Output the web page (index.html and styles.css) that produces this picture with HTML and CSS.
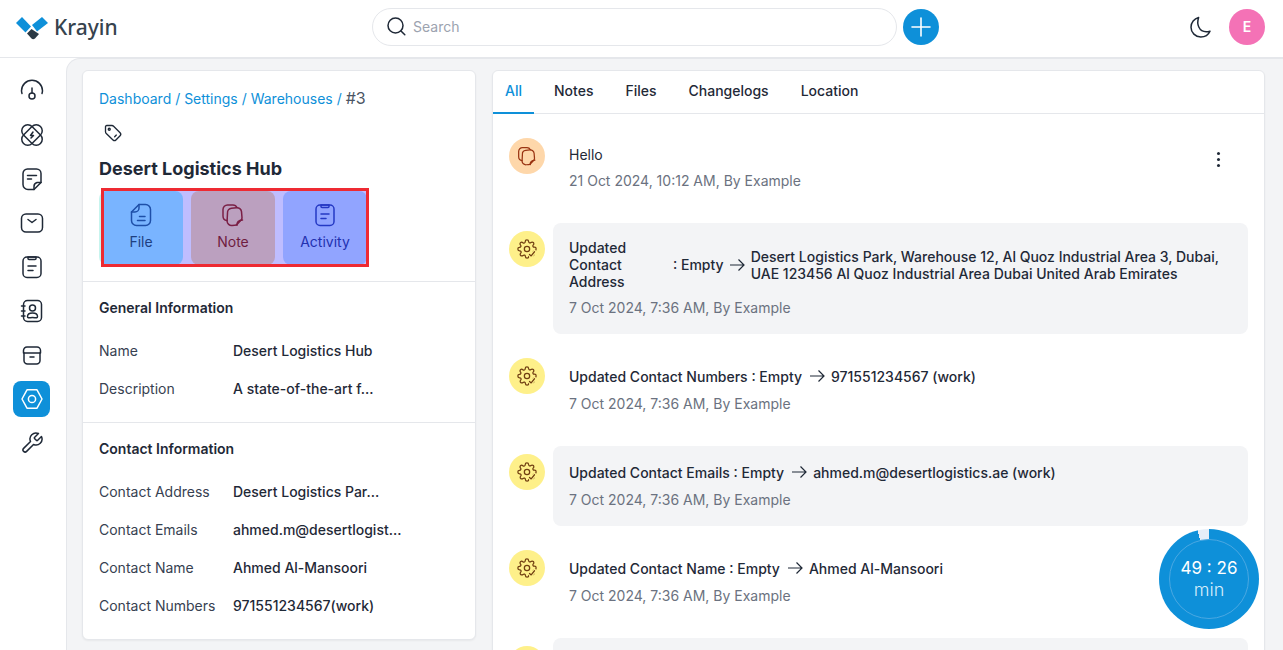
FILE: index.html
```html
<!DOCTYPE html>
<html lang="en">
<head>
    <meta charset="UTF-8">
    <meta name="viewport" content="width=device-width, initial-scale=1.0">
    <title>Krayin - Warehouse</title>
    <link rel="stylesheet" href="styles.css">
</head>
<body>
    <header class="topbar">
        <div class="logo">
            <svg width="36" height="26" viewBox="15 14 36 26">
                <path d="M16 23 22 17 31 26.500 25.500 32.500Z" fill="#0e90d9"/>
                <path d="M32 25 42 17 48 23 37 31.500Z" fill="#0e90d9"/>
                <path d="M27 33.500 31.500 29 39 34 35 38.500Q33 40 31.500 38.500Z" fill="#2b3a45"/>
            </svg>
            <span class="logo-text">Krayin</span>
        </div>
        <div class="search">
            <svg width="20" height="20" viewBox="0 0 20 20" fill="none" stroke="#1f2937" stroke-width="1.5" stroke-linecap="round"><circle cx="8.500" cy="8.500" r="7.500"/><path d="M14 14 17.800 17.800"/></svg>
            <span>Search</span>
        </div>
        <div class="plus-btn">
            <svg width="24" height="24" viewBox="0 0 24 24" fill="none" stroke="#fff" stroke-width="1.6" stroke-linecap="round"><path d="M12 3v18M3 12h18"/></svg>
        </div>
        <div class="topbar-right">
            <svg class="moon" width="24" height="24" viewBox="0 0 24 24" fill="none" stroke="#1f2937" stroke-width="1.5" stroke-linejoin="round"><path d="M9.600 2.500C5.200 3.600 2 7.600 2 12.200 2 17.600 6.400 22 11.800 22c3.800 0 7.600-2.200 9.200-5.800-5.200 1.400-9.400-.4-11.200-4.200-1.400-3-1.200-6.400-.2-9.500Z"/></svg>
            <div class="avatar">E</div>
        </div>
    </header>

    <div class="shell">
        <nav class="sidebar">
            <div class="nav-item">
                <svg class="icon" viewBox="0 0 24 24"><path d="M2 14.500C1.700 13.500 1.500 12.600 1.500 11.800a10.500 10.500 0 0 1 21 0c0 .8-.2 1.700-.5 2.700"/><path d="M12 9v5"/><circle cx="12" cy="17" r="3"/></svg>
            </div>
            <div class="nav-item">
                <svg class="icon" viewBox="0 0 24 24"><rect x="0" y="6" width="24" height="12" rx="6" transform="rotate(45 12 12)"/><rect x="0" y="6" width="24" height="12" rx="6" transform="rotate(-45 12 12)"/><path d="M13 9 10.500 12.500h3L11 15"/></svg>
            </div>
            <div class="nav-item">
                <svg class="icon" viewBox="0 0 24 24"><path d="M14 22.500H8a5 5 0 0 1-5-5v-11A4.500 4.500 0 0 1 7.500 2h9A4.500 4.500 0 0 1 21 6.500V15.500Z"/><path d="M14 22.500v-3a4 4 0 0 1 3-4h4"/><path d="M7.500 8.500h9M7.500 12h4"/></svg>
            </div>
            <div class="nav-item">
                <svg class="icon" viewBox="0 0 24 24"><rect x="1.500" y="3" width="21" height="18" rx="4.500"/><path d="M8 8.500 12 11.500 16 8.500"/></svg>
            </div>
            <div class="nav-item">
                <svg class="icon" viewBox="0 0 24 24"><rect x="3" y="2" width="18" height="20.500" rx="4"/><path d="M8 2h8v1.500a1 1 0 0 1-1 1H9a1 1 0 0 1-1-1Z"/><path d="M8 11h8M8 15.500h5"/></svg>
            </div>
            <div class="nav-item">
                <svg class="icon" viewBox="0 0 24 24"><rect x="3.500" y="1.500" width="18" height="21" rx="4"/><circle cx="12.500" cy="9" r="3"/><path d="M7.500 17.500c0-2 2-3.500 5-3.500s5 1.500 5 3.500-2 1-5 1-5 1-5-1Z"/><path d="M1.500 7h3.500M1.500 12h3.500M1.500 17h3.500"/></svg>
            </div>
            <div class="nav-item">
                <svg class="icon" viewBox="0 0 24 24"><path d="M4 10v7.500a3.500 3.500 0 0 0 3.500 3.500h9a3.500 3.500 0 0 0 3.500-3.500V10"/><path d="M3.500 10V7.500A3.500 3.500 0 0 1 7 4h10a3.500 3.500 0 0 1 3.500 3.500V10Z"/><path d="M10 14h4"/></svg>
            </div>
            <div class="nav-item active">
                <svg class="icon" viewBox="0 0 24 24"><path d="M7 2.800h10L22 12l-5 9.200H7L2 12Z"/><circle cx="12" cy="12" r="3.600"/></svg>
            </div>
            <div class="nav-item">
                <svg class="icon" viewBox="0 0 24 24"><path d="M14.700 6.300a1 1 0 0 0 0 1.400l1.600 1.600a1 1 0 0 0 1.400 0l3.770-3.770a6 6 0 0 1-7.940 7.940l-6.910 6.910a2.120 2.120 0 0 1-3-3l6.910-6.910a6 6 0 0 1 7.940-7.940l-3.760 3.760Z"/></svg>
            </div>
        </nav>

        <main class="main">
            <section class="card info-card">
                <div class="head">
                    <div class="breadcrumb"><a>Dashboard</a> / <a>Settings</a> / <a>Warehouses</a> / <span>#3</span></div>
                    <svg class="tag" viewBox="0 0 24 24"><path d="M4.500 3h6.200a3 3 0 0 1 2 .9l7.800 7.900a2.500 2.500 0 0 1 0 3.500l-5 5a2.500 2.500 0 0 1-3.500 0L3.900 12.600a3 3 0 0 1-.9-2V4.500A1.500 1.500 0 0 1 4.500 3Z"/><circle cx="7.500" cy="7.500" r="1.200"/><path d="M14 16.500l2-2"/></svg>
                    <h1>Desert Logistics Hub</h1>
                    <div class="actions">
                        <div class="action action-file">
                            <svg class="icon" viewBox="0 0 24 24"><path d="M10 1.500h6.500a5 5 0 0 1 5 5v11a5 5 0 0 1-5 5h-9a5 5 0 0 1-5-5V9Z"/><path d="M2.500 9H6a4 4 0 0 0 4-4V1.500"/><path d="M10.500 13.500h5.500M8.500 17.500h7.500"/></svg>
                            <span>File</span>
                        </div>
                        <div class="action action-note">
                            <svg class="icon" viewBox="0 0 24 24"><use href="#note"/></svg>
                            <span>Note</span>
                        </div>
                        <div class="action action-activity">
                            <svg class="icon" viewBox="0 0 24 24"><rect x="3" y="2" width="18" height="20.500" rx="4"/><path d="M8 2h8v1.500a1 1 0 0 1-1 1H9a1 1 0 0 1-1-1Z"/><path d="M8 11h8M8 15.500h5"/></svg>
                            <span>Activity</span>
                        </div>
                        <div class="highlight"></div>
                    </div>
                </div>

                <div class="info-block">
                    <h2>General Information</h2>
                    <div class="info-row"><span>Name</span><span class="val">Desert Logistics Hub</span></div>
                    <div class="info-row"><span>Description</span><span class="val">A state-of-the-art f...</span></div>
                </div>

                <div class="info-block">
                    <h2>Contact Information</h2>
                    <div class="info-row"><span>Contact Address</span><span class="val">Desert Logistics Par...</span></div>
                    <div class="info-row"><span>Contact Emails</span><span class="val">ahmed.m@desertlogist...</span></div>
                    <div class="info-row"><span>Contact Name</span><span class="val">Ahmed Al-Mansoori</span></div>
                    <div class="info-row"><span>Contact Numbers</span><span class="val">971551234567(work)</span></div>
                </div>
            </section>

            <section class="card activity-card">
                <div class="tabs">
                    <div class="tab current">All</div>
                    <div class="tab">Notes</div>
                    <div class="tab">Files</div>
                    <div class="tab">Changelogs</div>
                    <div class="tab">Location</div>
                </div>
                <div class="feed">
                    <div class="entry entry-first">
                        <div class="badge badge-note">
                            <svg class="icon" viewBox="0 0 24 24"><use href="#note"/></svg>
                        </div>
                        <div class="body">
                            <div class="line plain">Hello</div>
                            <div class="date">21 Oct 2024, 10:12 AM, By Example</div>
                            <div class="kebab"><i></i><i></i><i></i></div>
                        </div>
                    </div>
                    <div class="entry">
                        <div class="badge badge-system"><svg class="icon" viewBox="0 0 24 24"><use href="#gear"/></svg></div>
                        <div class="body shaded">
                            <div class="line">
                                <span class="label-narrow">Updated Contact Address</span>
                                <span class="nowrap">: Empty</span>
                                <svg class="arrow" viewBox="0 0 16 16"><path d="M1 8h14M9.500 2.500 15 8l-5.500 5.500"/></svg>
                                <span>Desert Logistics Park, Warehouse 12, Al Quoz Industrial Area 3, Dubai, UAE 123456 Al Quoz Industrial Area Dubai United Arab Emirates</span>
                            </div>
                            <div class="date">7 Oct 2024, 7:36 AM, By Example</div>
                        </div>
                    </div>
                    <div class="entry">
                        <div class="badge badge-system"><svg class="icon" viewBox="0 0 24 24"><use href="#gear"/></svg></div>
                        <div class="body">
                            <div class="line">
                                <span class="lead">Updated Contact Numbers : Empty</span>
                                <svg class="arrow" viewBox="0 0 16 16"><path d="M1 8h14M9.500 2.500 15 8l-5.500 5.500"/></svg>
                                <span>971551234567 (work)</span>
                            </div>
                            <div class="date">7 Oct 2024, 7:36 AM, By Example</div>
                        </div>
                    </div>
                    <div class="entry">
                        <div class="badge badge-system"><svg class="icon" viewBox="0 0 24 24"><use href="#gear"/></svg></div>
                        <div class="body shaded">
                            <div class="line">
                                <span class="lead">Updated Contact Emails : Empty</span>
                                <svg class="arrow" viewBox="0 0 16 16"><path d="M1 8h14M9.500 2.500 15 8l-5.500 5.500"/></svg>
                                <span>ahmed.m@desertlogistics.ae (work)</span>
                            </div>
                            <div class="date">7 Oct 2024, 7:36 AM, By Example</div>
                        </div>
                    </div>
                    <div class="entry">
                        <div class="badge badge-system"><svg class="icon" viewBox="0 0 24 24"><use href="#gear"/></svg></div>
                        <div class="body">
                            <div class="line">
                                <span class="lead">Updated Contact Name : Empty</span>
                                <svg class="arrow" viewBox="0 0 16 16"><path d="M1 8h14M9.500 2.500 15 8l-5.500 5.500"/></svg>
                                <span>Ahmed Al-Mansoori</span>
                            </div>
                            <div class="date">7 Oct 2024, 7:36 AM, By Example</div>
                        </div>
                    </div>
                    <div class="entry">
                        <div class="badge badge-system"><svg class="icon" viewBox="0 0 24 24"><use href="#gear"/></svg></div>
                        <div class="body shaded body-empty"></div>
                    </div>
                </div>
            </section>
        </main>
    </div>

    <div class="timer">
        <div class="timer-inner">
            <div class="timer-time">49 : 26</div>
            <div class="timer-unit">min</div>
        </div>
    </div>

    <svg class="defs" width="0" height="0">
        <defs>
            <g id="gear">
                <circle cx="12" cy="12" r="3.200"/>
                <path d="M19.400 15a1.650 1.650 0 0 0 .33 1.820l.06.06a2 2 0 1 1-2.830 2.830l-.06-.06a1.650 1.650 0 0 0-2.800 1.170V21a2 2 0 1 1-4 0v-.09a1.650 1.650 0 0 0-2.800-1.170l-.06.06a2 2 0 1 1-2.830-2.830l.06-.06a1.650 1.650 0 0 0-1.170-2.800H3a2 2 0 1 1 0-4h.09a1.650 1.650 0 0 0 1.170-2.800l-.06-.06a2 2 0 1 1 2.830-2.830l.06.06a1.650 1.650 0 0 0 2.800-1.170V3a2 2 0 1 1 4 0v.09a1.650 1.650 0 0 0 2.800 1.170l.06-.06a2 2 0 1 1 2.830 2.830l-.06.06a1.650 1.650 0 0 0 1.170 2.800H21a2 2 0 1 1 0 4h-.09a1.650 1.650 0 0 0-1.510 1Z"/>
                <path d="M15 18.500l2 1.800 4-5" stroke="#fef08a" stroke-width="4.500"/>
                <path d="M15 18.500l2 1.800 4-5"/>
            </g>
            <g id="note">
                <path d="M6 17.500A4.500 4.500 0 0 1 2 13V6.500A4.500 4.500 0 0 1 6.500 2H12a4.500 4.500 0 0 1 4 2.500"/>
                <path d="M6.500 10a4.500 4.500 0 0 1 4-4.800l5-.5a4.500 4.500 0 0 1 5 4l.5 5.800c.1 1-.2 1.800-.9 2.600l-3.900 4.200c-.6.600-1.400 1-2.300 1l-3 .2a4.500 4.500 0 0 1-4.800-4.200Z"/>
                <path d="M16 22.300c-.4-3 1.500-5 5.500-5.300"/>
            </g>
        </defs>
    </svg>
</body>
</html>
```

FILE: styles.css
```css
* {
    box-sizing: border-box;
}
html, body {
    height: 100%;
}
body {
    margin: 0;
    font-family: Inter, "Liberation Sans", sans-serif;
    font-size: 14px;
    line-height: 20px;
    color: #1f2937;
    background: #fff;
    overflow: hidden;
}
h1, h2 {
    margin: 0;
}
.icon {
    width: 24px;
    height: 24px;
    fill: none;
    stroke: #1f2937;
    stroke-width: 1.5;
    stroke-linecap: round;
    stroke-linejoin: round;
}

/* top bar */
.topbar {
    display: flex;
    align-items: center;
    height: 58px;
    padding: 0 18px 4px 15px;
    background: #fff;
    border-bottom: 1px solid #e5e7eb;
}
.logo {
    display: flex;
    align-items: center;
    gap: 4px;
    width: 357px;
}
.logo-text {
    margin: 1px 0 0 -1px;
    font-family: "Noto Sans", sans-serif;
    font-size: 21px;
    font-weight: 500;
    color: #36434e;
}
.search {
    display: flex;
    align-items: center;
    gap: 6px;
    width: 525px;
    height: 38px;
    padding-left: 14px;
    border: 1px solid #e5e7eb;
    border-radius: 19px;
    color: #9ca3af;
}
.plus-btn {
    display: flex;
    align-items: center;
    justify-content: center;
    width: 36px;
    height: 36px;
    margin-left: 6px;
    border-radius: 50%;
    background: #0e90d9;
}
.topbar-right {
    display: flex;
    align-items: center;
    gap: 16px;
    margin-left: auto;
}
.avatar {
    display: flex;
    align-items: center;
    justify-content: center;
    width: 36px;
    height: 36px;
    border-radius: 50%;
    background: #f472b6;
    color: #fff;
    font-weight: 600;
}

/* layout */
.shell {
    display: flex;
    height: calc(100% - 58px);
}
.sidebar {
    display: flex;
    flex-direction: column;
    gap: 8px;
    width: 66px;
    padding: 15px 0 0 13px;
}
.nav-item {
    display: flex;
    align-items: center;
    justify-content: center;
    width: 37px;
    height: 36px;
    border-radius: 8px;
}
.nav-item.active {
    background: #0e90d9;
}
.nav-item.active .icon {
    stroke: #fff;
}
.main {
    flex: 1;
    display: flex;
    align-items: flex-start;
    gap: 16px;
    padding: 11px 18px 0 15px;
    background: #f3f4f6;
    border-top: 1px solid #e5e7eb;
    border-left: 1px solid #e5e7eb;
    border-top-left-radius: 14px;
    overflow: hidden;
}
.card {
    background: #fff;
    border: 1px solid #e5e7eb;
    border-radius: 6px;
    box-shadow: 0 1px 2px rgba(0, 0, 0, 0.05);
}

/* left card */
.info-card {
    flex: 0 0 394px;
    height: 570px;
}
.head {
    padding: 17px 16px 16px;
    border-bottom: 1px solid #e5e7eb;
}
.breadcrumb {
    color: #0e90d9;
}
.breadcrumb span {
    font-size: 16px;
    color: #4b5563;
}
.tag {
    display: block;
    width: 20px;
    height: 20px;
    margin: 14px 0 0 4px;
    fill: none;
    stroke: #1f2937;
    stroke-width: 1.6;
    stroke-linecap: round;
    stroke-linejoin: round;
}
h1 {
    margin-top: 14px;
    font-size: 18px;
    line-height: 24px;
    font-weight: 700;
    color: #1f2937;
}
.actions {
    position: relative;
    display: flex;
    gap: 8px;
    width: 268px;
    margin-top: 10px;
    background: linear-gradient(to right, transparent 2px, #bfbdff 2px);
}
.action {
    display: flex;
    flex-direction: column;
    align-items: center;
    gap: 5px;
    width: 84px;
    height: 74px;
    padding-top: 12px;
    border-radius: 8px;
    font-weight: 400;
}
.action-file {
    background: linear-gradient(to right, #c7f4ee 2px, #79b4ff 2px);
    color: #1e3f80;
}
.action-file .icon {
    stroke: #1e4fa8;
}
.action-note {
    background: #bba0bf;
    color: #6f1c40;
}
.action-note .icon {
    stroke: #7a1f45;
}
.action-activity {
    background: #91a4ff;
    color: #2231b0;
}
.action-activity .icon {
    stroke: #2438c4;
}
.highlight {
    position: absolute;
    left: 2px;
    top: -3px;
    width: 268px;
    height: 79px;
    border: 3px solid #ee2a32;
}
.info-block {
    padding: 16px 16px 5px;
    border-bottom: 1px solid #e5e7eb;
}
.info-block:last-child {
    border-bottom: 0;
}
h2 {
    margin-bottom: 23px;
    font-size: 14px;
    line-height: 20px;
    font-weight: 600;
    color: #1f2937;
}
.info-row {
    display: grid;
    grid-template-columns: 134px 1fr;
    height: 38px;
    color: #374151;
}
.val {
    font-weight: 500;
    color: #1f2937;
}

/* right card */
.activity-card {
    flex: 1;
    height: 700px;
}
.tabs {
    display: flex;
    gap: 8px;
    height: 43px;
    border-bottom: 1px solid #e5e7eb;
}
.tab {
    height: 43px;
    padding: 10px 12px 0;
    font-weight: 500;
    color: #1f2937;
}
.tab.current {
    color: #0e90d9;
    border-bottom: 2px solid #0e90d9;
}
.feed {
    display: flex;
    flex-direction: column;
    gap: 16px;
    padding: 16px 16px 0;
}
.entry {
    display: flex;
    gap: 8px;
    align-items: flex-start;
}
.badge {
    display: flex;
    flex: 0 0 36px;
    align-items: center;
    justify-content: center;
    height: 36px;
    margin-top: 8px;
    border-radius: 50%;
}
.badge .icon {
    width: 20px;
    height: 20px;
}
.badge-note {
    background: #fed7aa;
}
.badge-note .icon {
    stroke: #9a3412;
}
.badge-system {
    background: #fef08a;
}
.badge-system .icon {
    stroke: #713f12;
}
.body {
    position: relative;
    flex: 1;
    padding: 16px;
    border-radius: 8px;
}
.body.shaded {
    background: #f3f4f6;
}
.body-empty {
    height: 80px;
}
.entry-first .body {
    padding-top: 15px;
}
.line {
    box-sizing: content-box;
    display: flex;
    align-items: center;
    gap: 6px;
    min-height: 20px;
    padding-bottom: 2px;
    font-weight: 500;
    line-height: 17px;
}
.line.plain {
    display: block;
    padding-bottom: 0;
    font-weight: 400;
    line-height: 20px;
}
.lead {
    padding-right: 1px;
}
.label-narrow {
    flex: 0 0 98px;
}
.nowrap {
    margin-right: -1px;
    white-space: nowrap;
}
.arrow {
    flex: 0 0 16px;
    width: 16px;
    height: 16px;
    fill: none;
    stroke: #1f2937;
    stroke-width: 1.2;
}
.date {
    margin-top: 6px;
    color: #6b7280;
}
.kebab {
    position: absolute;
    top: 22px;
    right: 28px;
    display: flex;
    flex-direction: column;
    gap: 3px;
}
.kebab i {
    width: 3px;
    height: 3px;
    border-radius: 50%;
    background: #1f2937;
}

/* floating timer */
.timer {
    position: fixed;
    left: 1159px;
    top: 529px;
    display: flex;
    align-items: center;
    justify-content: center;
    width: 100px;
    height: 100px;
    border-radius: 50%;
    background: conic-gradient(#0e90d9 0 347deg, #e6eef8 347deg 360deg);
}
.timer-inner {
    width: 80px;
    height: 80px;
    padding-top: 18px;
    border: 1px solid #4aa8e2;
    border-radius: 50%;
    background: #0e90d9;
    color: #fff;
    text-align: center;
    font-size: 18px;
    line-height: 21px;
}
.timer-time {
    font-size: 17px;
}
.timer-unit {
    color: #d6ecfa;
    font-weight: 300;
}
.defs {
    position: absolute;
}
```
